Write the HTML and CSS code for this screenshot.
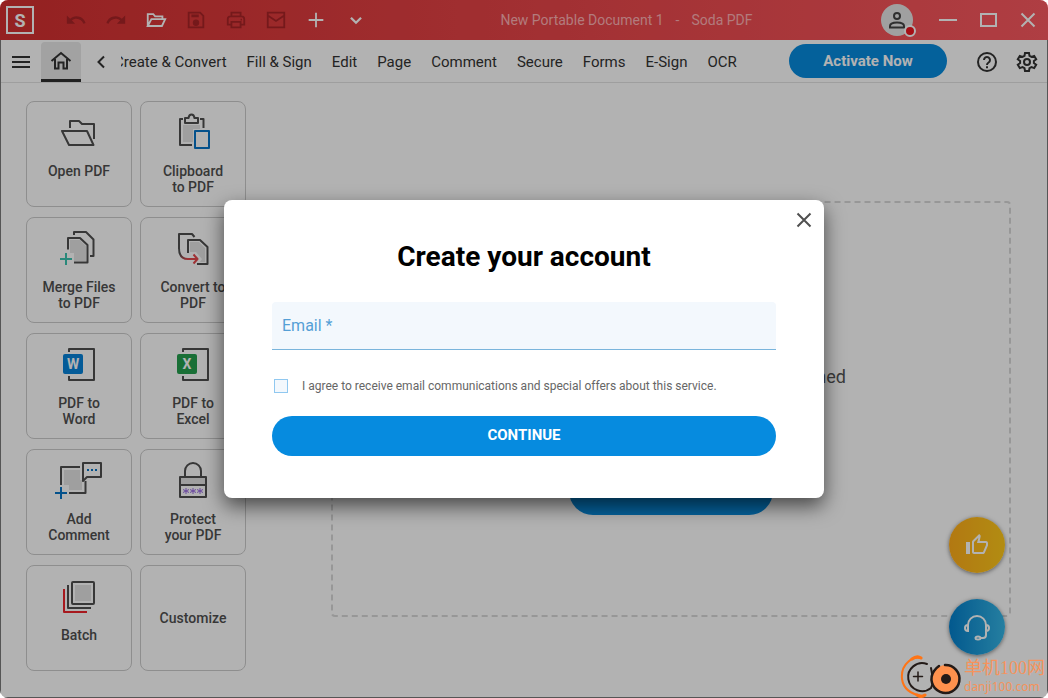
FILE: index.html
```html
<!DOCTYPE html>
<html lang="en">
<head>
<meta charset="utf-8">
<title>New Portable Document 1 - Soda PDF</title>
<link rel="stylesheet" href="styles.css">
</head>
<body>
<div class="window">
  <header class="titlebar">
    <div class="logo">S</div>
    <div class="quick">
      <button class="tool faded" aria-label="Undo"><svg viewBox="0 0 24 24"><path fill="currentColor" d="M12.500 8c-2.650 0-5.050 1-6.900 2.600L2 7v9h9l-3.620-3.620c1.390-1.160 3.160-1.880 5.120-1.880 3.540 0 6.550 2.310 7.600 5.500l2.370-.78C21.080 11.030 17.150 8 12.500 8z"/></svg></button>
      <button class="tool faded" aria-label="Redo"><svg viewBox="0 0 24 24"><path fill="currentColor" d="M18.400 10.600C16.550 9 14.150 8 11.500 8c-4.650 0-8.580 3.030-9.960 7.220L3.900 16c1.050-3.190 4.050-5.500 7.600-5.500 1.950 0 3.730.72 5.120 1.880L13 16h9V7l-3.600 3.600z"/></svg></button>
      <button class="tool" aria-label="Open"><svg viewBox="0 0 24 24" class="line"><path d="M3 18.500V5.500h6l2 2.500h8v3M3 18.500l4-7.500h15l-3.500 7.500z"/></svg></button>
      <button class="tool faded" aria-label="Save"><svg viewBox="0 0 24 24" class="line"><path d="M4 4h12.500L20 7.500V20H4z"/><path d="M7 7.500h8" stroke-width="3"/><circle cx="12" cy="15" r="2.500" fill="currentColor"/></svg></button>
      <button class="tool faded" aria-label="Print"><svg viewBox="0 0 24 24" class="line"><path d="M7 8V4h10v4M7 17H3V11q0-3 3-3h12q3 0 3 3v6h-4M7 14h10v6H7z"/><path d="M17 11.500h1.500"/></svg></button>
      <button class="tool faded" aria-label="Mail"><svg viewBox="0 0 24 24" class="line"><path d="M3 4h18v16H3zM3 7l9 6 9-6"/></svg></button>
      <button class="tool" aria-label="New"><svg viewBox="0 0 24 24" class="line"><path d="M12 4v16M4 12h16"/></svg></button>
      <button class="tool" aria-label="More"><svg viewBox="0 0 24 24" class="line"><path d="M6.500 9.500l5.500 5.500 5.500-5.500" stroke-width="2.500"/></svg></button>
    </div>
    <div class="doc-title"><span>New Portable Document 1</span><span>-</span><span>Soda PDF</span></div>
    <button class="avatar" aria-label="Account"><svg viewBox="0 0 32 32" class="line"><circle cx="16" cy="12" r="3"/><path d="M9 23.500v-1.500c0-2.500 4-3.500 7-3.500s7 1 7 3.500v1.500z"/></svg><span class="status"></span></button>
    <div class="controls">
      <button class="tool" aria-label="Minimize"><svg viewBox="0 0 24 24" class="line"><path d="M3 12h18"/></svg></button>
      <button class="tool" aria-label="Maximize"><svg viewBox="0 0 24 24" class="line"><path d="M5 6h15v12H5z"/></svg></button>
      <button class="tool" aria-label="Close window"><svg viewBox="0 0 24 24" class="line"><path d="M5.500 5.500l13 13M18.500 5.500l-13 13"/></svg></button>
    </div>
  </header>

  <div class="frame">
    <nav class="menubar">
      <button class="tool" aria-label="Menu"><svg viewBox="0 0 24 24" class="line"><path d="M3 7h18M3 12h18M3 17h18"/></svg></button>
      <button class="tool home" aria-label="Home"><svg viewBox="0 0 24 24" class="line"><path d="M2.500 12L12 4l9.500 8M6 10v9.500h3.500v-6h5v6H18V10"/></svg></button>
      <button class="tool" aria-label="Scroll left"><svg viewBox="0 0 24 24" class="line"><path d="M15 6.500L9.500 12l5.500 5.500"/></svg></button>
      <div class="tabs">
        <div class="tab-row">
          <button>Create &amp; Convert</button><button>Fill &amp; Sign</button><button>Edit</button><button>Page</button><button>Comment</button><button>Secure</button><button>Forms</button><button>E-Sign</button><button>OCR</button>
        </div>
      </div>
      <button class="activate">Activate Now</button>
      <button class="tool" aria-label="Help"><svg viewBox="0 0 24 24" class="line"><circle cx="12" cy="12" r="9"/><path d="M9 10a3 3 0 1 1 4.600 2.500Q12 13.500 12 15"/><path d="M12 16.200v2"/></svg></button>
      <button class="tool" aria-label="Settings"><svg viewBox="0 0 24 24" class="line"><path d="M10 3h4l.5 2.900 2 1.100 2.700-1.100 2 3.400-2.300 1.700v2l2.300 1.700-2 3.400-2.700-1.100-2 1.100L14 21h-4l-.5-2.900-2-1.100-2.700 1.100-2-3.400 2.300-1.700v-2L2.800 9.300l2-3.400L7.500 7l2-1.100z"/><circle cx="12" cy="12" r="3"/></svg></button>
    </nav>

    <main class="home-page">
      <div class="tiles">
        <button class="tile"><svg viewBox="0 0 48 48"><path d="M15 19v-7h9l3 3h12v15M7 22h25l6.500 14H14z"/></svg><span>Open PDF</span></button>
        <button class="tile"><svg viewBox="0 0 48 48"><path class="shade" d="M14 16h17v4h-7v13H14z"/><path d="M14 10h-3v26h12M31 10h3.500v9M16 14V9h3.500q.5-3.500 3-3.500t3 3.500H29v5z"/><path class="blue" d="M26 22h14v17H26z"/></svg><span>Clipboard<br>to PDF</span></button>
        <button class="tile"><svg viewBox="0 0 48 48"><path d="M19 10V7h12l7.500 7.500V31H35"/><path class="shade" d="M15 15h10l6 6v15H19v-8h-4z"/><path d="M13 24.500V13h12l7.500 7V37.500H19"/><path class="teal" d="M11 28v12M5 34h12"/></svg><span>Merge Files<br>to PDF</span></button>
        <button class="tile"><svg viewBox="0 0 48 48"><defs><linearGradient id="bend" x1="0" y1="0" x2="1" y2="1"><stop offset=".3" stop-color="#505050"/><stop offset="1" stop-color="#e5484d"/></linearGradient></defs><path d="M25.500 12L23 9H10v15"/><path class="shade" d="M21 17h9l6 6v14h-5l2-3-6-7h-6z"/><path d="M19 28V15h12l7.500 7v17H28"/><path stroke="url(#bend)" d="M10 23q0 11 9 11"/><path class="red" d="M18 34h10M24.500 29.500l4 4.500-4 4.500"/></svg><span>Convert to<br>PDF</span></button>
        <button class="tile"><svg viewBox="0 0 48 48"><path d="M14 11V8h25v31H14v-4"/><rect class="badge word" x="8" y="13" width="20" height="20" rx="2"/><text x="18" y="28">W</text></svg><span>PDF to<br>Word</span></button>
        <button class="tile"><svg viewBox="0 0 48 48"><path d="M14 11V8h25v31H14v-4"/><rect class="badge excel" x="8" y="13" width="20" height="20" rx="2"/><text x="18" y="28">X</text></svg><span>PDF to<br>Excel</span></button>
        <button class="tile"><svg viewBox="0 0 48 48"><path class="shade" d="M9 13h16v10h2v10H14v-5H9z"/><path d="M6 28V10h19M30.500 24v12H14"/><path d="M28 6h18v14H32l-4 4z"/><path class="blue" d="M32 13h2M36 13h2M40 13h2"/><path class="blue" d="M6 30v12M0 36h12"/></svg><span>Add<br>Comment</span></button>
        <button class="tile"><svg viewBox="0 0 48 48"><path class="shade" d="M11 20h26v7H11z"/><path d="M16 20v-6a8 8 0 0 1 16 0v6M11 20h26v20H11zM11 28h26"/><path class="purple" d="M17 31v6M14 32.500l6 3M20 32.500l-6 3M24 31v6M21 32.500l6 3M27 32.500l-6 3M31 31v6M28 32.500l6 3M34 32.500l-6 3"/></svg><span>Protect<br>your PDF</span></button>
        <button class="tile"><svg viewBox="0 0 48 48"><path class="shade" d="M20 12h16v16H20z"/><rect x="17" y="9" width="22" height="22" rx="1"/><path d="M13 12v23h23"/><path class="crimson" d="M9 16v23h23"/></svg><span>Batch</span></button>
        <button class="tile plain"><span>Customize</span></button>
      </div>
      <section class="dropzone">
        <p>opened</p>
        <button class="open" aria-label="Open"></button>
      </section>
    </main>
  </div>

  <div class="floating">
    <button class="fab like" aria-label="Like"><svg viewBox="0 0 24 24"><path fill="currentColor" d="M9 21h9c.83 0 1.540-.5 1.840-1.220l3.020-7.050c.09-.23.140-.47.140-.73v-2c0-1.100-.9-2-2-2h-6.310l.95-4.570.03-.32c0-.41-.17-.79-.44-1.060L14.170 1 7.580 7.590C7.220 7.950 7 8.450 7 9v10c0 1.100.9 2 2 2zM9 9l4.340-4.340L12 10h9v2l-3 7H9V9zM1 9h4v12H1z"/></svg></button>
    <button class="fab support" aria-label="Support"><svg viewBox="0 0 28 28" class="line"><path d="M5 16V12a9 9 0 0 1 18 0v4M5 12q-3 0-3 3t3 3zM23 12q3 0 3 3t-3 3zM23 18v4q0 3-3 3h-3"/><ellipse cx="15" cy="25" rx="2.500" ry="1.500"/></svg></button>
  </div>

  <div class="backdrop">
    <form class="dialog" role="dialog" aria-labelledby="dialog-title">
      <button type="button" class="close" aria-label="Close"><svg viewBox="0 0 24 24" class="line"><path d="M5.500 5.500l13 13M18.500 5.500l-13 13"/></svg></button>
      <h1 id="dialog-title">Create your account</h1>
      <input class="email" type="email" placeholder="Email *" aria-label="Email">
      <div class="consent"><input type="checkbox" id="consent"><label for="consent">I agree to receive email communications and special offers about this service.</label></div>
      <button type="button" class="continue">CONTINUE</button>
    </form>
  </div>
</div>

<div class="watermark">
  <svg viewBox="0 0 64 44"><g fill="none" stroke-linecap="round"><path d="M20 4Q13 3 8 8 1 14 2 25q2 14 20 17" stroke="#ff7415" stroke-width="2"/><path d="M12 5Q17 1 21 4M17 41q4 3 8 0" stroke="#ff7415" stroke-width="3"/><path d="M27 10A14 14 0 1 0 31 34q2-4 2-9l-2-11" stroke="#231a17" stroke-width="2"/><path d="M18 18v9M13.500 22.500h9" stroke="#231a17" stroke-width="1.500"/><circle cx="46" cy="25" r="14" fill="#ff914d"/><path d="M45 11a14 14 0 1 1-11 6q2-3 5-5" stroke="#231a17" stroke-width="2.500"/></g><circle cx="46" cy="25" r="5" fill="#231a17"/></svg>
  <div class="mark-text"><span class="mark-name">单机100网</span><span class="mark-url">danji100.com</span></div>
</div>
</body>
</html>
```
FILE: styles.css
```css
* { box-sizing: border-box; }

body {
  margin: 0;
  background: #fff;
  font-family: Roboto, "Noto Sans CJK SC", sans-serif;
  font-size: 15px;
  color: #333;
}

button {
  margin: 0;
  padding: 0;
  border: 0;
  background: none;
  font: inherit;
  color: inherit;
}

svg { display: block; }

.line {
  fill: none;
  stroke: currentColor;
  stroke-width: 2;
}

.window {
  position: relative;
  display: flex;
  flex-direction: column;
  min-height: 100vh;
  border-radius: 8px;
  overflow: hidden;
}

.titlebar {
  display: flex;
  align-items: center;
  height: 40px;
  padding-left: 6px;
  background: linear-gradient(90deg, #d43030, #fb5960);
  color: #fff;
}

.logo {
  width: 28px;
  height: 28px;
  margin-right: 22px;
  border: 2px solid #fff;
  font-size: 18px;
  font-weight: 700;
  line-height: 25px;
  text-align: center;
}

.quick, .controls { display: flex; }

.tool {
  display: grid;
  place-items: center;
  flex: none;
  width: 40px;
  height: 40px;
}

.tool svg { width: 24px; height: 24px; }

.quick .tool svg { width: 22px; height: 22px; }

.faded { color: #a82427; }

.doc-title {
  display: flex;
  flex: 1;
  justify-content: center;
  gap: 12px;
  font-size: 14px;
  color: #ffb1b3;
}

.avatar {
  position: relative;
  width: 32px;
  height: 32px;
  margin: 0 15px 0 4px;
  border-radius: 50%;
  background: #e6e6e6;
  color: #444;
}

.status {
  position: absolute;
  right: -3px;
  bottom: -1px;
  width: 12px;
  height: 12px;
  border: 2px solid #fff;
  border-radius: 50%;
  background: #ee1620;
}

.frame {
  display: flex;
  flex: 1;
  flex-direction: column;
  border: 1px solid #7a7a7a;
  border-top: 0;
}

.menubar {
  display: flex;
  align-items: center;
  height: 43px;
  padding-top: 2px;
  border-bottom: 1px solid #e2e2e2;
}

.home {
  border-radius: 4px 4px 0 0;
  border-bottom: 3px solid #303030;
  background: #e8e8e8;
}

.tabs {
  flex: 1;
  overflow: hidden;
}

.tab-row {
  display: flex;
  gap: 20px;
  margin-left: -7px;
  white-space: nowrap;
}

.activate {
  width: 158px;
  height: 34px;
  margin: 0 20px 2px 0;
  border-radius: 17px;
  background: #068bdf;
  color: #fff;
  font-weight: 700;
}

.home-page {
  display: flex;
  flex: 1;
  padding: 18px 36px 26px 25px;
}

.tiles {
  display: grid;
  grid-template-columns: repeat(2, 106px);
  grid-auto-rows: 106px;
  gap: 10px 8px;
}

.tile {
  display: flex;
  flex-direction: column;
  align-items: center;
  gap: 6px;
  padding-top: 7px;
  border: 1px solid #ccc;
  border-radius: 8px;
  font-size: 14px;
  font-weight: 500;
  line-height: 16px;
  color: #505050;
}

.plain {
  justify-content: center;
  padding: 0;
}

.tile svg {
  width: 48px;
  height: 48px;
  fill: none;
  stroke: #505050;
  stroke-width: 2;
  stroke-linejoin: round;
  overflow: visible;
}

.tile .shade { fill: #e4e4e4; stroke: none; }
.tile .blue { stroke: #0674c8; }
.tile .teal { stroke: #3cc5b1; }
.tile .red { stroke: #e5484d; }
.tile .crimson { stroke: #f0252c; }
.tile .purple { stroke: #996ae5; stroke-width: 1; }
.tile .badge { stroke: none; }
.tile .word { fill: #0683da; }
.tile .excel { fill: #24a04e; }

.tile text {
  fill: #fff;
  stroke: none;
  font-size: 14px;
  font-weight: 700;
  text-anchor: middle;
}

.dropzone {
  display: flex;
  flex: 1;
  flex-direction: column;
  align-items: center;
  justify-content: flex-end;
  margin: 100px 0 54px 85px;
  padding-bottom: 100px;
  border: 2px dashed #d9d9d9;
  border-radius: 4px;
}

.dropzone p {
  width: 350px;
  margin: 0 0 78px;
  font-size: 18px;
  line-height: 24px;
  text-align: right;
  color: #555;
}

.open {
  width: 204px;
  height: 48px;
  border-radius: 24px;
  background: #068bdf;
}

.floating {
  position: absolute;
  right: 43px;
  bottom: 43px;
  display: grid;
  gap: 26px;
}

.fab {
  display: grid;
  place-items: center;
  width: 56px;
  height: 56px;
  border-radius: 50%;
  box-shadow: 0 1px 4px rgba(0, 0, 0, .5);
  color: #fff;
}

.fab svg { width: 24px; height: 24px; }

.like { background: linear-gradient(90deg, #ffad1a, #ffc91a); }

.support { background: linear-gradient(90deg, #0480cc, #36b6e6); }

.support svg { width: 28px; height: 28px; }

.backdrop {
  position: absolute;
  inset: 0;
  display: grid;
  place-items: center;
  background: rgba(0, 0, 0, .3);
}

.dialog {
  position: relative;
  display: flex;
  flex-direction: column;
  width: 600px;
  max-width: 100%;
  padding: 41px 48px 42px;
  border-radius: 8px;
  background: #fff;
  box-shadow: 0 8px 20px rgba(0, 0, 0, .6);
}

.close {
  position: absolute;
  top: 8px;
  right: 8px;
  color: #505050;
}

.close svg { width: 24px; height: 24px; }

.dialog h1 {
  margin: 0 0 29px;
  font-size: 28px;
  font-weight: 700;
  line-height: 32px;
  text-align: center;
  color: #000;
}

.email {
  height: 48px;
  padding: 0 10px;
  border: 0;
  border-bottom: 1px solid #7ab5dc;
  border-radius: 4px 4px 0 0;
  background: #f3f8fd;
  font: 16px Roboto, sans-serif;
}

.email::placeholder { color: #559fd6; opacity: 1; }

.consent {
  display: flex;
  align-items: center;
  gap: 14px;
  height: 16px;
  margin: 28px 0 22px;
  padding-left: 2px;
  font-size: 12px;
  color: #666;
}

.consent input {
  appearance: none;
  width: 14px;
  height: 14px;
  margin: 0;
  border: 1px solid #90c8f0;
  background: #f3f8fd;
}

.continue {
  height: 40px;
  padding-bottom: 2px;
  border-radius: 20px;
  background: #068bdf;
  color: #fff;
  font-size: 15px;
  font-weight: 700;
}

.watermark {
  position: absolute;
  right: 2px;
  bottom: 0;
  display: flex;
  align-items: center;
  color: #f5935c;
}

.watermark svg { width: 64px; height: 44px; }

.mark-text {
  display: flex;
  flex-direction: column;
  width: 82px;
  white-space: nowrap;
}

.mark-name {
  font-family: "Liberation Serif", "Noto Sans CJK SC", serif;
  font-size: 18px;
  line-height: 22px;
}

.mark-url {
  font-family: "Noto Sans", sans-serif;
  font-size: 12px;
  line-height: 16px;
}
```
